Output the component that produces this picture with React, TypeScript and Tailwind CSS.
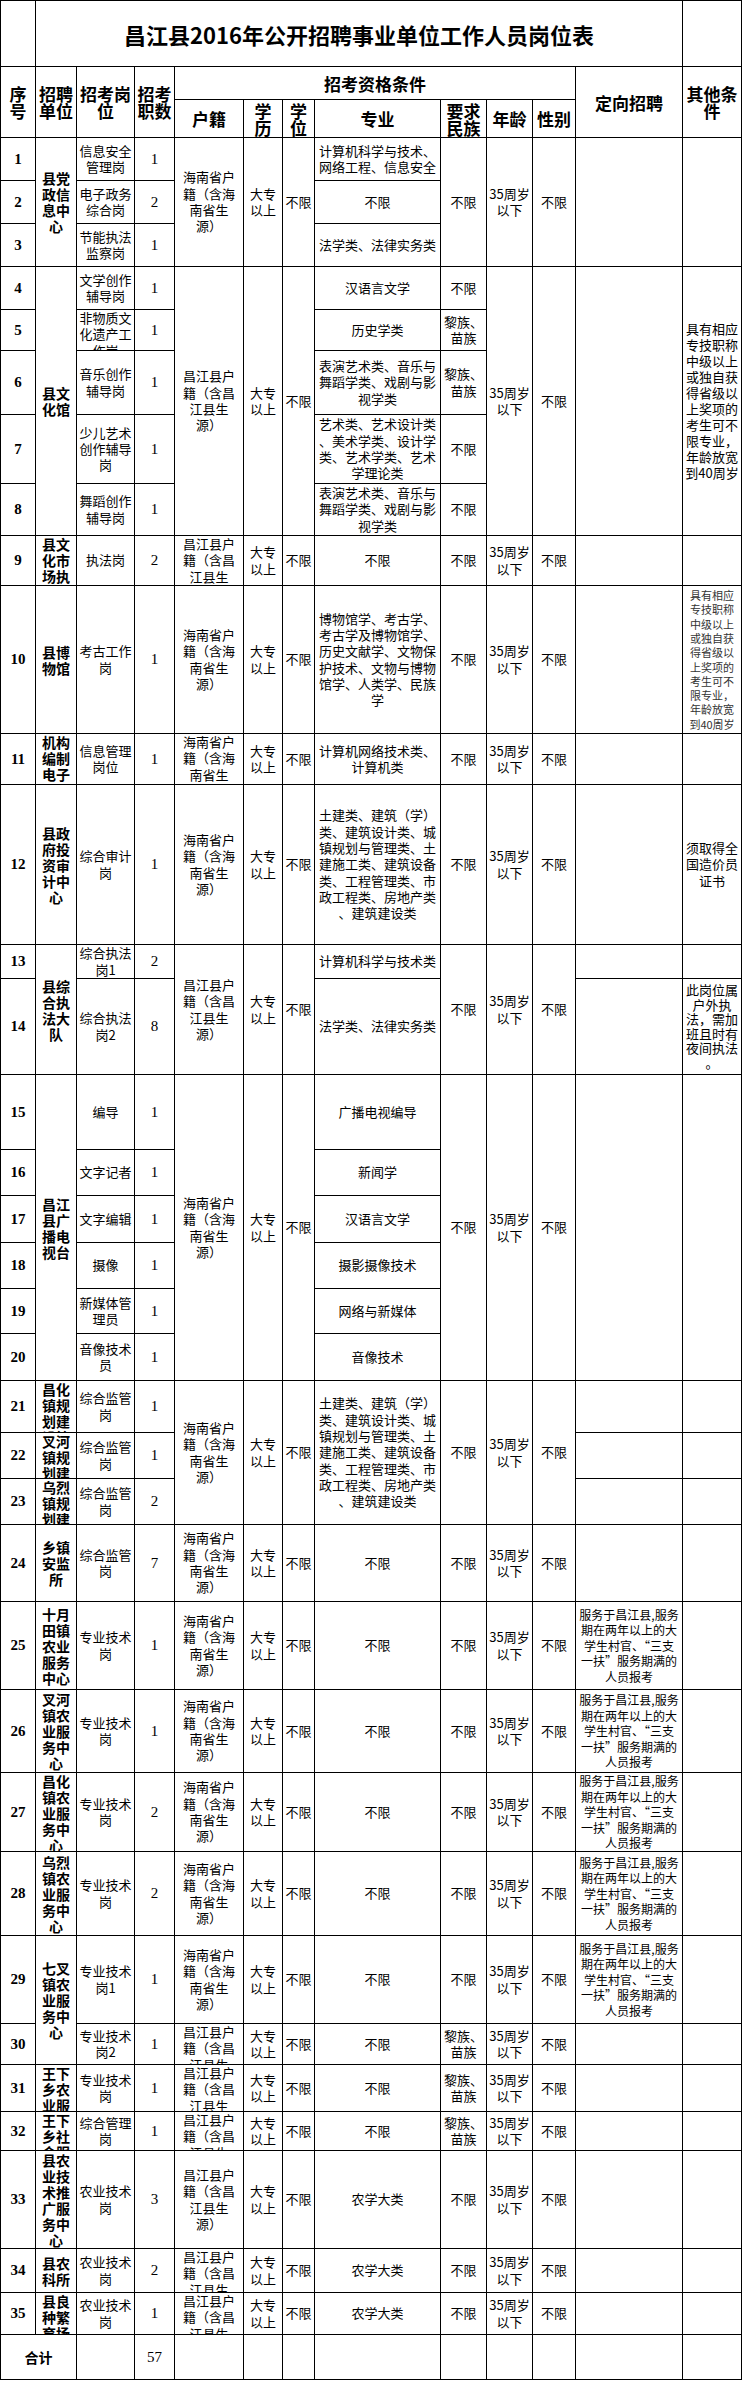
import React from 'react';

type Kind = 'b' | 'n' | 'u' | 'k' | 'h' | 't' | 'm' | 'x' | 's' | 'q';
type Cell = { t: string; span?: string; k?: Kind };

const KIND: Record<Kind, string> = {
  b: "text-[13px] leading-[16.3px]",
  n: "font-['Liberation_Serif','Noto_Sans_CJK_SC',serif] font-bold text-[15px] leading-[17px]",
  u: "font-bold text-[14px] leading-[16px]",
  k: "font-['Liberation_Serif','Noto_Sans_CJK_SC',serif] text-[15px] leading-[17px]",
  h: "font-bold text-[17px] leading-[17px]",
  t: "font-bold text-[22px] leading-[26px]",
  m: "text-[13px] leading-[16px]",
  x: "text-[11px] leading-[14.3px] text-[#333]",
  s: "text-[12px] leading-[15.5px]",
  q: "text-[13px] leading-[14.5px]",
};

const b = (t: string, span = ''): Cell => ({ t, span, k: 'b' });
const n = (t: string): Cell => ({ t, k: 'n' });
const u = (t: string, span = ''): Cell => ({ t, span, k: 'u' });
const k = (t: string): Cell => ({ t, k: 'k' });
const h = (t: string, span = ''): Cell => ({ t, span, k: 'h' });

const HN = '海南省户|籍（含海|南省生|源）';
const CJ = '昌江县户|籍（含昌|江县生|源）';
const DZ = '大专|以上';
const BX = '不限';
const AGE = '35周岁|以下';
const LM = '黎族、|苗族';
const TJ =
  '土建类、建筑（学）|类、建筑设计类、城|镇规划与管理类、土|建施工类、建筑设备|类、工程管理类、市|政工程类、房地产类|、建筑建设类';
const FW = '服务于昌江县,服务|期在两年以上的大|学生村官、“三支|一扶”服务期满的|人员报考';
const QT = '具有相应|专技职称|中级以上|或独自获|得省级以|上奖项的|考生可不|限专业，|年龄放宽|到40周岁';

const fwRow = (no: string, unit: string, post: string, cnt: string, unitSpan = ''): Cell[] => [
  n(no),
  u(unit, unitSpan),
  b(post),
  k(cnt),
  b(HN),
  b(DZ),
  b(BX),
  b(BX),
  b(BX),
  b(AGE),
  b(BX),
  { t: FW, k: 's' },
  b(''),
];

const cjRow = (no: string, unit: string, post: string, cnt: string, major: string, nation: string): Cell[] => [
  n(no),
  u(unit),
  b(post),
  k(cnt),
  b(CJ),
  b(DZ),
  b(BX),
  b(major),
  b(nation),
  b(AGE),
  b(BX),
  b(''),
  b(''),
];

const cells: Cell[] = [
  // title
  b(''),
  { t: '昌江县2016年公开招聘事业单位工作人员岗位表', span: 'col-span-11', k: 't' },
  b(''),
  // header
  h('序|号', 'row-span-2'),
  h('招聘|单位', 'row-span-2'),
  h('招考岗|位', 'row-span-2'),
  h('招考|职数', 'row-span-2'),
  h('招考资格条件', 'col-span-7'),
  h('定向招聘', 'row-span-2'),
  h('其他条|件', 'row-span-2'),
  h('户籍'),
  h('学|历'),
  h('学|位'),
  h('专业'),
  h('要求|民族'),
  h('年龄'),
  h('性别'),
  // 1-3
  n('1'),
  u('县党|政信|息中|心', 'row-span-3'),
  b('信息安全|管理岗'),
  k('1'),
  b(HN, 'row-span-3'),
  b(DZ, 'row-span-3'),
  b(BX, 'row-span-3'),
  b('计算机科学与技术、|网络工程、信息安全'),
  b(BX, 'row-span-3'),
  b(AGE, 'row-span-3'),
  b(BX, 'row-span-3'),
  b('', 'row-span-3'),
  b('', 'row-span-3'),
  n('2'),
  b('电子政务|综合岗'),
  k('2'),
  b(BX),
  n('3'),
  b('节能执法|监察岗'),
  k('1'),
  b('法学类、法律实务类'),
  // 4-8
  n('4'),
  u('县文|化馆', 'row-span-5'),
  b('文学创作|辅导岗'),
  k('1'),
  b(CJ, 'row-span-5'),
  b(DZ, 'row-span-5'),
  b(BX, 'row-span-5'),
  b('汉语言文学'),
  b(BX),
  b(AGE, 'row-span-5'),
  b(BX, 'row-span-5'),
  b('', 'row-span-5'),
  { t: QT, span: 'row-span-5', k: 'm' },
  n('5'),
  b('非物质文|化遗产工|作岗'),
  k('1'),
  b('历史学类'),
  b(LM),
  n('6'),
  b('音乐创作|辅导岗'),
  k('1'),
  b('表演艺术类、音乐与|舞蹈学类、戏剧与影|视学类'),
  b(LM),
  n('7'),
  b('少儿艺术|创作辅导|岗'),
  k('1'),
  b('艺术类、艺术设计类|、美术学类、设计学|类、艺术学类、艺术|学理论类'),
  b(BX),
  n('8'),
  b('舞蹈创作|辅导岗'),
  k('1'),
  b('表演艺术类、音乐与|舞蹈学类、戏剧与影|视学类'),
  b(BX),
  // 9
  n('9'),
  u('县文|化市|场执|法大|队'),
  b('执法岗'),
  k('2'),
  b(CJ),
  b(DZ),
  b(BX),
  b(BX),
  b(BX),
  b(AGE),
  b(BX),
  b(''),
  b(''),
  // 10
  n('10'),
  u('县博|物馆'),
  b('考古工作|岗'),
  k('1'),
  b(HN),
  b(DZ),
  b(BX),
  b('博物馆学、考古学、|考古学及博物馆学、|历史文献学、文物保|护技术、文物与博物|馆学、人类学、民族|学'),
  b(BX),
  b(AGE),
  b(BX),
  b(''),
  { t: QT, k: 'x' },
  // 11
  n('11'),
  u('机构|编制|电子|政务|中心'),
  b('信息管理|岗位'),
  k('1'),
  b(HN),
  b(DZ),
  b(BX),
  b('计算机网络技术类、|计算机类'),
  b(BX),
  b(AGE),
  b(BX),
  b(''),
  b(''),
  // 12
  n('12'),
  u('县政|府投|资审|计中|心'),
  b('综合审计|岗'),
  k('1'),
  b(HN),
  b(DZ),
  b(BX),
  b(TJ),
  b(BX),
  b(AGE),
  b(BX),
  b(''),
  b('须取得全|国造价员|证书'),
  // 13-14
  n('13'),
  u('县综|合执|法大|队', 'row-span-2'),
  b('综合执法|岗1'),
  k('2'),
  b(CJ, 'row-span-2'),
  b(DZ, 'row-span-2'),
  b(BX, 'row-span-2'),
  b('计算机科学与技术类'),
  b(BX, 'row-span-2'),
  b(AGE, 'row-span-2'),
  b(BX, 'row-span-2'),
  b(''),
  b(''),
  n('14'),
  b('综合执法|岗2'),
  k('8'),
  b('法学类、法律实务类'),
  b(''),
  { t: '此岗位属|户外执|法，需加|班且时有|夜间执法|。', k: 'q' },
  // 15-20
  n('15'),
  u('昌江|县广|播电|视台', 'row-span-6'),
  b('编导'),
  k('1'),
  b(HN, 'row-span-6'),
  b(DZ, 'row-span-6'),
  b(BX, 'row-span-6'),
  b('广播电视编导'),
  b(BX, 'row-span-6'),
  b(AGE, 'row-span-6'),
  b(BX, 'row-span-6'),
  b('', 'row-span-6'),
  b('', 'row-span-6'),
  n('16'),
  b('文字记者'),
  k('1'),
  b('新闻学'),
  n('17'),
  b('文字编辑'),
  k('1'),
  b('汉语言文学'),
  n('18'),
  b('摄像'),
  k('1'),
  b('摄影摄像技术'),
  n('19'),
  b('新媒体管|理员'),
  k('1'),
  b('网络与新媒体'),
  n('20'),
  b('音像技术|员'),
  k('1'),
  b('音像技术'),
  // 21-23
  n('21'),
  u('昌化|镇规|划建|设管|理所'),
  b('综合监管|岗'),
  k('1'),
  b(HN, 'row-span-3'),
  b(DZ, 'row-span-3'),
  b(BX, 'row-span-3'),
  b(TJ, 'row-span-3'),
  b(BX, 'row-span-3'),
  b(AGE, 'row-span-3'),
  b(BX, 'row-span-3'),
  b(''),
  b(''),
  n('22'),
  u('叉河|镇规|划建|设管|理所'),
  b('综合监管|岗'),
  k('1'),
  b(''),
  b(''),
  n('23'),
  u('乌烈|镇规|划建|设管|理所'),
  b('综合监管|岗'),
  k('2'),
  b(''),
  b(''),
  // 24
  n('24'),
  u('乡镇|安监|所'),
  b('综合监管|岗'),
  k('7'),
  b(HN),
  b(DZ),
  b(BX),
  b(BX),
  b(BX),
  b(AGE),
  b(BX),
  b(''),
  b(''),
  // 25-29
  ...fwRow('25', '十月|田镇|农业|服务|中心', '专业技术|岗', '1'),
  ...fwRow('26', '叉河|镇农|业服|务中|心', '专业技术|岗', '1'),
  ...fwRow('27', '昌化|镇农|业服|务中|心', '专业技术|岗', '2'),
  ...fwRow('28', '乌烈|镇农|业服|务中|心', '专业技术|岗', '2'),
  ...fwRow('29', '七叉|镇农|业服|务中|心', '专业技术|岗1', '1', 'row-span-2'),
  // 30
  n('30'),
  b('专业技术|岗2'),
  k('1'),
  b(CJ),
  b(DZ),
  b(BX),
  b(BX),
  b(LM),
  b(AGE),
  b(BX),
  b(''),
  b(''),
  // 31-35
  ...cjRow('31', '王下|乡农|业服|务中|心', '专业技术|岗', '1', BX, LM),
  ...cjRow('32', '王下|乡社|会服|务中|心', '综合管理|岗', '1', BX, LM),
  ...cjRow('33', '县农|业技|术推|广服|务中|心', '农业技术|岗', '3', '农学大类', BX),
  ...cjRow('34', '县农|科所', '农业技术|岗', '2', '农学大类', BX),
  ...cjRow('35', '县良|种繁|育场', '农业技术|岗', '1', '农学大类', BX),
  // total
  u('合计', 'col-span-2'),
  b(''),
  k('57'),
  b(''),
  b(''),
  b(''),
  b(''),
  b(''),
  b(''),
  b(''),
  b(''),
  b(''),
];

export default function App() {
  return (
    <div className="w-[742px] min-h-[2382px] bg-white text-black font-['Noto_Sans_CJK_SC',sans-serif]">
      <div className="grid w-[742px] grid-cols-[35px_41px_58px_40px_69px_39px_32px_126px_46px_46px_43px_107px_59px] grid-rows-[66px_33px_38px_43px_43px_43px_43px_41px_64px_69px_52px_50px_148px_51px_160px_34px_96px_75px_46px_47px_46px_45px_47px_52px_46px_46px_77px_88px_83px_79px_84px_88px_41px_47px_39px_98px_44px_42px_45px] border-l border-t border-black">
        {cells.map((c, i) => (
          <div
            key={i}
            className={`${c.span ?? ''} flex flex-col overflow-hidden border-r border-b border-black text-center ${KIND[c.k ?? 'b']}`}
          >
            <div className="my-auto w-full">
              {c.t
                ? c.t.split('|').map((l, j) => (
                    <div key={j} className="whitespace-nowrap">
                      {l}
                    </div>
                  ))
                : null}
            </div>
          </div>
        ))}
      </div>
    </div>
  );
}
